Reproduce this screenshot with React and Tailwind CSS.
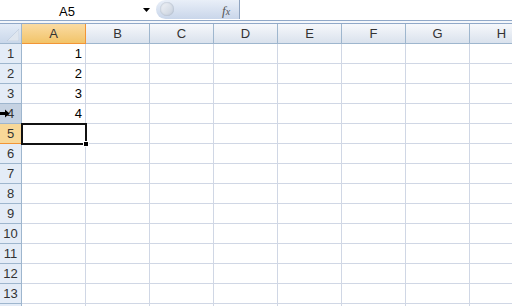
import React from "react";

const cols = ["A", "B", "C", "D", "E", "F", "G", "H"];
const rows = [1, 2, 3, 4, 5, 6, 7, 8, 9, 10, 11, 12, 13, 14];
const values = { 1: "1", 2: "2", 3: "3", 4: "4" };

export default function App() {
  return (
    <div className="w-[512px] h-[306px] overflow-hidden bg-white relative" style={{ fontFamily: '"Liberation Sans", Arial, sans-serif' }}>
      {/* formula bar */}
      <div className="h-[20px] flex items-stretch bg-white">
        <div className="w-[156px] flex items-center relative">
          <span className="absolute left-[59px] top-[2px] text-[13px] text-black">A5</span>
          <svg className="absolute left-[143px] top-[8px]" width="7" height="4" viewBox="0 0 7 4">
            <path d="M0 0 H7 L3.5 4 Z" fill="#000" />
          </svg>
        </div>
        <div className="w-[84px] h-[19px] rounded-l-full bg-gradient-to-b from-[#e9eff8] to-[#c9d6ea] border-r border-[#8fa4c0] relative">
          <div className="absolute left-[4px] top-[2px] w-[14px] h-[14px] rounded-full bg-gradient-to-br from-[#f4f6f9] to-[#c6cfdc] shadow-[inset_0_0_2px_#9aa8bb]" />
          <span className="absolute left-[66px] top-[1px] text-[13px] italic text-[#555]" style={{ fontFamily: '"Liberation Serif", serif' }}>f<span className="text-[10px]">x</span></span>
        </div>
        <div className="flex-1" />
      </div>
      <div className="h-px bg-[#90a8c8]" />
      <div className="h-[2px] bg-[#f4f7fb]" />
      <div className="h-px bg-[#90a8c8]" />
      {/* header row */}
      <div className="flex h-[20px]">
        <div className="w-[22px] shrink-0 border-r border-b border-[#9eb6ce] bg-gradient-to-b from-[#e4ecf7] to-[#c9d7ea] relative">
          <svg className="absolute right-[2px] bottom-[2px]" width="12" height="12" viewBox="0 0 12 12">
            <path d="M12 0 V12 H0 Z" fill="#dfe6ef" stroke="#b3c2d6" strokeWidth="0.5" />
          </svg>
        </div>
        {cols.map((c) => (
          <div
            key={c}
            className={
              c === "A"
                ? "w-[64px] shrink-0 flex items-center justify-center text-[13px] text-[#333] bg-gradient-to-b from-[#fadba2] to-[#f2c468] border-r border-b border-[#f29536]"
                : "w-[64px] shrink-0 flex items-center justify-center text-[13px] text-[#333] bg-gradient-to-b from-[#f6f8fb] to-[#dae2ed] border-r border-b border-[#9eb6ce]"
            }
          >
            {c}
          </div>
        ))}
      </div>
      {rows.map((r) => (
        <div key={r} className="flex h-[20px]">
          <div
            className={
              r === 5
                ? "w-[22px] shrink-0 flex items-center justify-center text-[13px] text-[#333] bg-[#f8d898] border-r border-b border-[#f29536] relative"
                : r === 4
                ? "w-[22px] shrink-0 flex items-center justify-center text-[13px] text-[#333] bg-[#c5d2e2] border-r border-b border-[#9eb6ce] relative"
                : "w-[22px] shrink-0 flex items-center justify-center text-[13px] text-[#333] bg-[#e4ecf7] border-r border-b border-[#9eb6ce] relative"
            }
          >
            {r < 14 ? r : null}
            {r === 4 && (
              <svg className="absolute left-0 top-[5px]" width="10" height="9" viewBox="0 0 10 9">
                <path d="M0 3 H5 V0.5 L9.5 4.5 L5 8.5 V6 H0 Z" fill="#000" />
              </svg>
            )}
          </div>
          {cols.map((c) => (
            <div
              key={c}
              className={
                c === "A" && r === 5
                  ? "w-[64px] shrink-0 border-r border-b border-[#d0d7e5] relative z-10 flex items-center justify-end pr-[3px] text-[13px] text-black"
                  : "w-[64px] shrink-0 border-r border-b border-[#d0d7e5] relative flex items-center justify-end pr-[3px] text-[13px] text-black"
              }
            >
              {c === "A" ? values[r] : null}
              {c === "A" && r === 5 && (
                <div className="absolute left-[-1px] top-[-1px] w-[66px] h-[22px] border-2 border-[#111]">
                  <div className="absolute right-[-4px] bottom-[-4px] w-[6px] h-[6px] bg-black border border-white" />
                </div>
              )}
            </div>
          ))}
        </div>
      ))}
    </div>
  );
}
